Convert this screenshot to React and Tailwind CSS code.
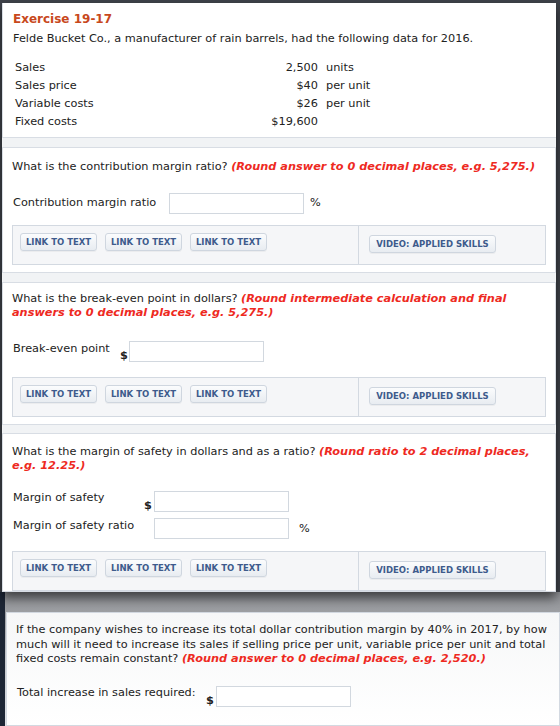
import React from 'react';

const font = { fontFamily: '"DejaVu Sans", Verdana, sans-serif' };

const LinkButton = ({ children, wide }) => (
  <span
    className={`flex h-[18px] items-center justify-center rounded-[3px] border border-[#cfd6df] bg-gradient-to-b from-[#fbfcfd] to-[#e8ecf1] text-[8.5px] font-bold text-[#3d5b8c] shadow-[0_1px_0_rgba(0,0,0,0.04)] ${wide ? 'w-[127px]' : 'w-[77px]'}`}
  >
    {children}
  </span>
);

const LinkBar = ({ split = 346 }) => (
  <div className="flex h-[40px] border border-[#d3d9e1] bg-[#f5f6f8]">
    <div className="flex gap-[8px] border-r border-[#d3d9e1] pl-[7px] pt-[7px]" style={{ width: split }}>
      <LinkButton>LINK TO TEXT</LinkButton>
      <LinkButton>LINK TO TEXT</LinkButton>
      <LinkButton>LINK TO TEXT</LinkButton>
    </div>
    <div className="pl-[10px] pt-[9px]">
      <LinkButton wide>VIDEO: APPLIED SKILLS</LinkButton>
    </div>
  </div>
);

const Input = ({ w = 'w-[135px]' }) => (
  <div className={`h-[21px] ${w} border border-[#d2d8df] bg-white`} />
);

const Hint = ({ children }) => (
  <span className="font-bold italic text-[#ee2a1f]">{children}</span>
);

const data = [
  ['Sales', '2,500', 'units'],
  ['Sales price', '$40', 'per unit'],
  ['Variable costs', '$26', 'per unit'],
  ['Fixed costs', '$19,600', ''],
];

export default function App() {
  return (
    <div className="relative h-[726px] w-[560px] overflow-hidden bg-[#3e4249] text-[11.3px] text-[#222]" style={font}>
      {/* popup card */}
      <div className="relative z-10 ml-[2px] mt-[3px] h-[589px] w-[554px] overflow-hidden bg-[#f1f3f5] shadow-[0_6px_10px_rgba(0,0,0,0.55)]">
        {/* intro */}
        <div className="h-[135px] border-b border-l border-[#d8dde4] bg-white pl-[10px] pt-[7px]">
          <p className="text-[12px] font-bold leading-[18px] text-[#c8481c]">Exercise 19-17</p>
          <p className="mt-[2px] leading-[18px]">Felde Bucket Co., a manufacturer of rain barrels, had the following data for 2016.</p>
          <div className="mt-[11px]">
            {data.map(([label, val, unit]) => (
              <div key={label} className="flex h-[18px] items-center">
                <span className="w-[200px] pl-[2px]">{label}</span>
                <span className="w-[105px] text-right">{val}</span>
                <span className="pl-[8px]">{unit}</span>
              </div>
            ))}
          </div>
        </div>

        {/* contribution margin ratio */}
        <div className="mt-[9px] h-[126px] border border-[#d8dde4] bg-white px-[9px] pt-[12px]">
          <p className="leading-[14px]">
            What is the contribution margin ratio? <Hint>(Round answer to 0 decimal places, e.g. 5,275.)</Hint>
          </p>
          <div className="mt-[19px] flex items-center">
            <span className="w-[157px] pl-[1px]">Contribution margin ratio</span>
            <Input />
            <span className="pl-[6px]">%</span>
          </div>
          <div className="mt-[11px]">
            <LinkBar />
          </div>
        </div>

        {/* break-even */}
        <div className="mt-[9px] h-[143px] border border-[#d8dde4] bg-white px-[9px] pt-[9px]">
          <p className="w-[505px] leading-[14px]">
            What is the break-even point in dollars? <Hint>(Round intermediate calculation and final answers to 0 decimal places, e.g. 5,275.)</Hint>
          </p>
          <div className="mt-[21px] flex items-start">
            <span className="w-[108px] pl-[1px] pt-[1px] leading-[14px]">Break-even point</span>
            <span className="mt-[8px] w-[9px] font-bold leading-[14px]">$</span>
            <Input />
          </div>
          <div className="mt-[14px]">
            <LinkBar />
          </div>
        </div>

        {/* margin of safety */}
        <div className="mt-[8px] border border-[#d8dde4] bg-white px-[9px] pt-[11px]">
          <p className="w-[532px] leading-[14px]">
            What is the margin of safety in dollars and as a ratio? <Hint>(Round ratio to 2 decimal places, e.g. 12.25.)</Hint>
          </p>
          <div className="mt-[18px] flex items-start">
            <span className="w-[132px] pl-[1px] leading-[14px]">Margin of safety</span>
            <span className="mt-[8px] w-[10px] font-bold leading-[14px]">$</span>
            <Input />
          </div>
          <div className="mt-[5px] flex items-start">
            <span className="w-[142px] pl-[1px] pt-[1px] leading-[14px]">Margin of safety ratio</span>
            <Input />
            <span className="pl-[10px] pt-[3px]">%</span>
          </div>
          <div className="mt-[12px]">
            <LinkBar />
          </div>
        </div>
      </div>

      {/* page underneath */}
      <div className="flex h-[134px]">
        <div className="w-[5px] bg-[#1d2635]" />
        <div className="flex-1 bg-gradient-to-b from-[#8d8f93] via-[#c4c6ca] to-[#dfe1e5] pl-[1px] pt-[20px]">
          <div className="h-full border border-[#d3d9e1] bg-gradient-to-b from-[#f6f7f8] to-white pl-[9px] pr-[2px] pt-[10px]">
            <p className="leading-[14.5px]">
              If the company wishes to increase its total dollar contribution margin by 40% in 2017, by how much will it need to increase its sales if selling price per unit, variable price per unit and total fixed costs remain constant? <Hint>(Round answer to 0 decimal places, e.g. 2,520.)</Hint>
            </p>
            <div className="mt-[19px] flex items-start">
              <span className="w-[190px] pl-[1px] leading-[14px]">Total increase in sales required:</span>
              <span className="mt-[8px] w-[10px] font-bold leading-[14px]">$</span>
              <Input />
            </div>
            <div className="mt-[17px] h-[20px] w-[537px] border border-[#d3d9e1] bg-[#f5f6f8]">
              <div className="h-full w-[346px] border-r border-[#d3d9e1]" />
            </div>
          </div>
        </div>
      </div>
    </div>
  );
}
